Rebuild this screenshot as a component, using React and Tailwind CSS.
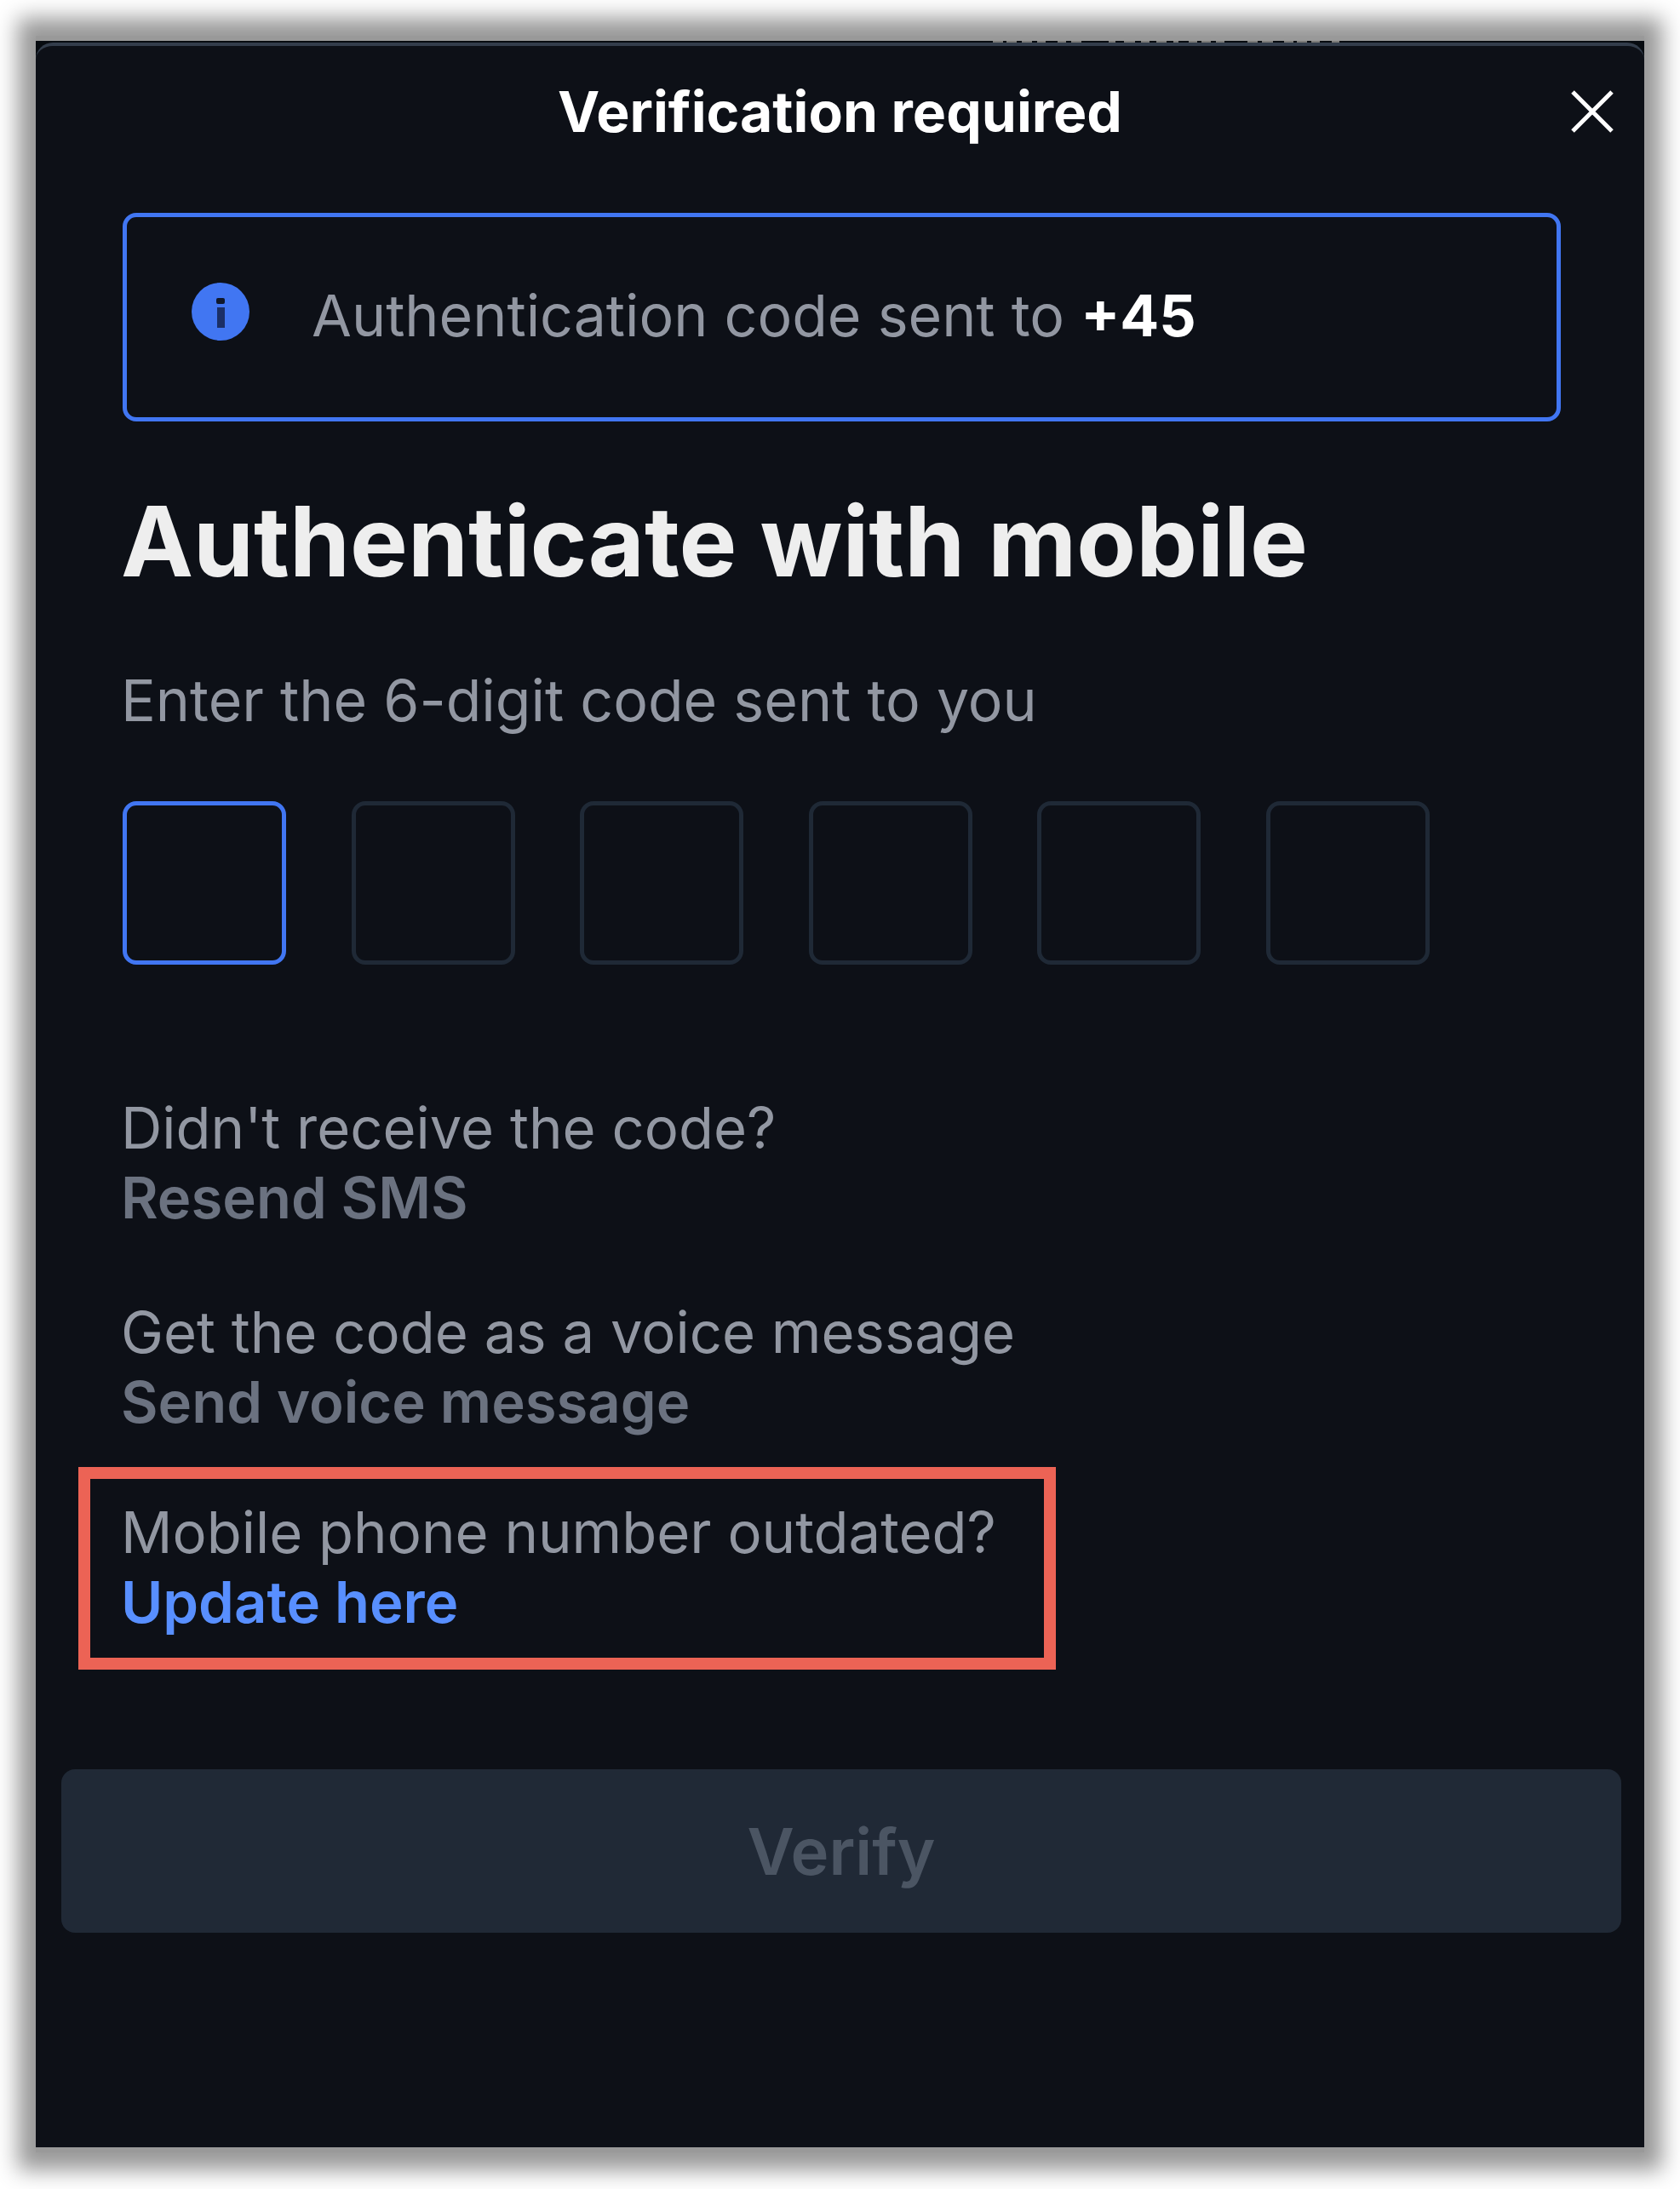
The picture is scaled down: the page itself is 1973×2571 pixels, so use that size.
import { useState } from 'react';

const CODE_LENGTH = 6;

function CloseIcon() {
  return (
    <svg viewBox="0 0 50 50" className="size-[50px]" fill="none" stroke="currentColor" strokeWidth="5" aria-hidden="true">
      <path d="M2 2 48 48M48 2 2 48" />
    </svg>
  );
}

function InfoIcon() {
  return (
    <svg viewBox="0 0 68 68" className="mt-[3px] size-[68px] shrink-0" aria-hidden="true">
      <circle cx="34" cy="34" r="34" fill="#4176f2" />
      <rect x="29" y="18" width="10" height="7" rx="2" fill="#10182c" />
      <rect x="30" y="29" width="9" height="24" fill="#1b2f66" />
    </svg>
  );
}

// Sliver of the page behind the dialog, peeking out over its top edge
function PageBehind() {
  return (
    <div className="flex h-0.5 justify-end pr-[357px]">
      <svg width="408" height="2" viewBox="0 0 408 2" stroke="#7d7c7a" strokeWidth="2" fill="none" aria-hidden="true">
        <path d="M0 1h12M16 1h12M34 1h12M52 1h10M76 1h10M92 1h12M136 1h8M154 1h13M174 1h10M192 1h12M212 1h6M230 1h10M245 1h11M262 1h10M299 1h12M316 1h13M342 1h11M357 1h12M374 1h10M398 1h9" />
      </svg>
    </div>
  );
}

function HelpItem({ question, action, disabled }) {
  return (
    <div className="flex flex-col items-start text-[67px] leading-[82px]">
      <p className="text-[#9297a2]">{question}</p>
      {disabled ? (
        <button type="button" disabled className="font-semibold text-[#6b7280]">{action}</button>
      ) : (
        <a href="#update" className="font-semibold text-[#588fff]">{action}</a>
      )}
    </div>
  );
}

export default function App() {
  const [code, setCode] = useState(Array(CODE_LENGTH).fill(''));

  const setDigit = (i, value) => {
    setCode(code.map((d, n) => (n === i ? value.replace(/\D/g, '') : d)));
  };

  return (
    <div className="min-h-screen bg-white p-[42px] font-['Inter',sans-serif] text-[68px] leading-[82px]">
      <div className="bg-[#999] py-1.5 shadow-[0_0_24px_21px_#999]">
        <main className="overflow-hidden bg-[#070b10]">
          <PageBehind />
          <div className="rounded-t-[20px] border-t-4 border-[#333d4b] bg-[#0d1017] pb-[252px]">
            {/* Title bar */}
            <header className="grid grid-cols-[1fr_auto_1fr] items-center px-9 pt-9">
              <h1 className="col-start-2 text-[66px] leading-[82px] font-bold text-white">Verification required</h1>
              <button type="button" aria-label="Close" className="justify-self-end text-white">
                <CloseIcon />
              </button>
            </header>

            <div className="pt-[78px] pr-[98px] pl-[100px]">
              <div role="status" className="ml-0.5 flex items-start gap-[73px] rounded-2xl border-5 border-[#4176f2] px-[76px] pt-[74px] pb-[79px] text-[#9297a2]">
                <InfoIcon />
                <p>
                  Authentication code sent to <strong className="font-bold text-white">+45</strong>
                </p>
              </div>

              <h2 className="mt-[76px] text-[114px] leading-[130px] font-bold text-[#eee]">Authenticate with mobile</h2>

              <p id="code-label" className="mt-20 text-[#9297a2]">Enter the 6-digit code sent to you</p>

              {/* One box per digit */}
              <div role="group" aria-labelledby="code-label" className="mt-[78px] ml-0.5 flex max-w-[1535px] justify-between">
                {code.map((digit, i) => (
                  <input
                    key={i}
                    value={digit}
                    onChange={e => setDigit(i, e.target.value)}
                    maxLength={1}
                    inputMode="numeric"
                    aria-label={`Digit ${i + 1}`}
                    className={`size-48 rounded-2xl border-5 text-center text-white outline-none ${
                      i === 0 ? 'border-[#4176f2]' : 'border-[#1f2936]'
                    }`}
                  />
                ))}
              </div>

              <div className="mt-[151px] flex flex-col gap-[76px]">
                <HelpItem question="Didn't receive the code?" action="Resend SMS" disabled />
                <HelpItem question="Get the code as a voice message" action="Send voice message" disabled />
              </div>
            </div>

            {/* Highlighted update option */}
            <div className="mt-[35px] ml-[50px] w-fit border-14 border-[#ec6355] pt-[22px] pr-14 pb-6 pl-9">
              <HelpItem question="Mobile phone number outdated?" action="Update here" />
            </div>

            <div className="pt-[117px] pr-[27px] pl-[30px]">
              <button type="submit" disabled className="h-48 w-full rounded-2xl bg-[#202936] text-[76px] font-semibold text-[#4b5563]">
                Verify
              </button>
            </div>
          </div>
        </main>
      </div>
    </div>
  );
}
